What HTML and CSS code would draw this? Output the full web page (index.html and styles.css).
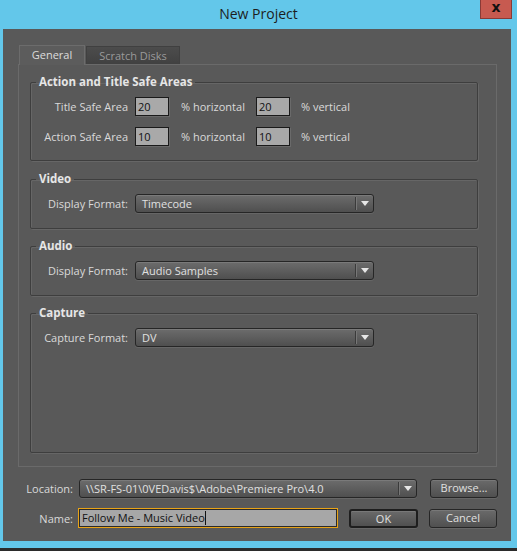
FILE: index.html
```html
<!DOCTYPE html>
<html>
<head>
<meta charset="utf-8">
<link rel="stylesheet" href="styles.css">
</head>
<body>
<div class="window">
  <div class="titlebar">
    <div class="title">New Project</div>
    <div class="close">x</div>
  </div>
  <div class="client">
    <div class="tabs">
      <div class="tab active">General</div>
      <div class="tab">Scratch Disks</div>
    </div>
    <div class="panel">
      <fieldset class="group">
        <legend>Action and Title Safe Areas</legend>
        <div class="row">
          <span class="label">Title Safe Area</span>
          <span class="num">20</span>
          <span class="unit">% horizontal</span>
          <span class="num">20</span>
          <span class="unit2">% vertical</span>
        </div>
        <div class="row second">
          <span class="label">Action Safe Area</span>
          <span class="num">10</span>
          <span class="unit">% horizontal</span>
          <span class="num">10</span>
          <span class="unit2">% vertical</span>
        </div>
      </fieldset>
      <fieldset class="group">
        <legend>Video</legend>
        <div class="row">
          <span class="label">Display Format:</span>
          <div class="select"><span class="value">Timecode</span><span class="arrow"></span></div>
        </div>
      </fieldset>
      <fieldset class="group">
        <legend>Audio</legend>
        <div class="row">
          <span class="label">Display Format:</span>
          <div class="select"><span class="value">Audio Samples</span><span class="arrow"></span></div>
        </div>
      </fieldset>
      <fieldset class="group grow">
        <legend>Capture</legend>
        <div class="row">
          <span class="label">Capture Format:</span>
          <div class="select"><span class="value">DV</span><span class="arrow"></span></div>
        </div>
      </fieldset>
    </div>
    <div class="bottom">
      <div class="brow">
        <span class="blabel">Location:</span>
        <div class="select wide"><span class="value">\\SR-FS-01\0VEDavis$\Adobe\Premiere Pro\4.0</span><span class="arrow"></span></div>
        <div class="btn">Browse...</div>
      </div>
      <div class="brow name">
        <span class="blabel">Name:</span>
        <div class="nameinput"><span class="nametext">Follow Me - Music Video</span><span class="caret"></span></div>
        <div class="btn default">OK</div>
        <div class="btn">Cancel</div>
      </div>
    </div>
  </div>
  <div class="edge"></div>
</div>
</body>
</html>
```
FILE: styles.css
```css
html, body {
  margin: 0;
  padding: 0;
}
body {
  background: #63c7ea;
  font-family: "Open Sans", "Liberation Sans", sans-serif;
  font-size: 11px;
  color: #d9d9d9;
}
.window {
  width: 517px;
  height: 551px;
  background: #63c7ea;
  display: flex;
  flex-direction: column;
  overflow: hidden;
}
.titlebar {
  height: 29px;
  display: grid;
  grid-template-columns: 1fr auto 1fr;
  flex: none;
}
.title {
  grid-column: 2;
  font-family: "Open Sans", sans-serif;
  font-size: 14px;
  color: #1d1d1d;
  line-height: 28px;
}
.close {
  grid-column: 3;
  justify-self: end;
  width: 30px;
  height: 18px;
  margin-right: 5px;
  background: #c75a50;
  border: 1px solid #8a3a36;
  border-top: none;
  color: #111;
  font-family: "DejaVu Sans", sans-serif;
  font-weight: bold;
  font-size: 14px;
  line-height: 15px;
  text-align: center;
}
.client {
  margin: 0 6px 0 3px;
  height: 512px;
  background: #595959;
  padding: 16px 0 0 15px;
  box-sizing: border-box;
  flex: none;
}
.tabs {
  display: flex;
  padding-left: 1px;
  height: 19px;
  align-items: flex-end;
}
.tab {
  width: 94px;
  height: 18px;
  box-sizing: border-box;
  line-height: 17px;
  text-align: center;
  border: 1px solid #404040;
  border-bottom: none;
  background: linear-gradient(#4c4c4c, #414141);
  color: #9a9a9a;
  margin-left: 1px;
}
.tab.active {
  width: 66px;
  height: 20px;
  margin-left: 0;
  margin-bottom: -1px;
  line-height: 18px;
  background: #5c5c5c;
  border-color: #6c6c6c;
  color: #dcdcdc;
  position: relative;
  z-index: 1;
}
.panel {
  width: 479px;
  height: 403px;
  box-sizing: border-box;
  border: 1px solid #6a6a6a;
  padding: 10px 18px 13px 11px;
  display: flex;
  flex-direction: column;
}
.group {
  margin: 0 0 11px 0;
  padding: 8px 0 14px 0;
  border: 1px solid #3e3e3e;
  border-radius: 2px;
  box-shadow: 1px 1px 0 #666, inset 1px 1px 0 #666;
  min-width: 0;
}
.group:nth-of-type(2) { padding-bottom: 15px; margin-bottom: 10px; }
.group:nth-of-type(3) { padding-bottom: 15px; margin-bottom: 10px; }
.group.grow { flex: 1; margin-bottom: 0; }
legend {
  font-weight: bold;
  font-size: 11.5px;
  color: #e6e6e6;
  margin-left: 5px;
  padding: 0 3px;
  line-height: 14px;
}
.row {
  display: flex;
  align-items: center;
  height: 19px;
}
.row.second { margin-top: 11px; }
.label {
  width: 97px;
  text-align: right;
  margin-right: 7px;
  flex: none;
}
.num {
  width: 34px;
  height: 19px;
  box-sizing: border-box;
  background: #a9a9a9;
  border: 1px solid #1a1a1a;
  box-shadow: 1px 1px 0 #6a6a6a;
  color: #111;
  padding-left: 2px;
  line-height: 17px;
  flex: none;
}
.unit {
  width: 87px;
  padding-left: 12px;
  box-sizing: border-box;
  flex: none;
}
.unit2 {
  padding-left: 11px;
}
.select {
  width: 239px;
  height: 19px;
  box-sizing: border-box;
  border: 1px solid #262626;
  border-radius: 3px;
  background: linear-gradient(#6c6c6c, #4f4f4f);
  box-shadow: inset 0 1px 0 #7a7a7a, 0 1px 0 #666;
  display: flex;
  align-items: center;
  flex: none;
}
.select .value {
  flex: 1;
  padding-left: 6px;
  color: #e0e0e0;
  white-space: nowrap;
  overflow: hidden;
}
.select .arrow {
  width: 17px;
  height: 13px;
  border-left: 1px solid #3a3a3a;
  box-shadow: inset 1px 0 0 #777;
  display: flex;
  align-items: center;
  justify-content: center;
  flex: none;
}
.select .arrow::after {
  content: "";
  border-left: 4px solid transparent;
  border-right: 4px solid transparent;
  border-top: 5px solid #e6e6e6;
}
.bottom {
  margin-left: -15px;
  padding-top: 12px;
}
.brow {
  display: flex;
  align-items: center;
  height: 19px;
}
.brow.name {
  margin-top: 10px;
  height: 20px;
}
.blabel {
  width: 70px;
  text-align: right;
  margin-right: 6px;
  flex: none;
}
.name .blabel { margin-right: 5px; }
.select.wide {
  width: 338px;
  margin-right: 13px;
}
.btn {
  width: 68px;
  height: 19px;
  box-sizing: border-box;
  border: 1px solid #262626;
  border-radius: 3px;
  background: linear-gradient(#6a6a6a, #505050);
  box-shadow: inset 0 1px 0 #787878, 0 1px 0 #666;
  text-align: center;
  line-height: 16px;
  color: #e0e0e0;
  flex: none;
}
.btn.default {
  width: 69px;
  border: 2px solid #1e1e1e;
  line-height: 15px;
  margin-right: 11px;
}
.nameinput {
  width: 260px;
  height: 20px;
  box-sizing: border-box;
  border: 1px solid #e8a317;
  background: #a7a7a7;
  box-shadow: inset 0 0 0 1px #2a2a2a;
  color: #111;
  padding-left: 3px;
  line-height: 18px;
  display: flex;
  align-items: center;
  margin-right: 11px;
  flex: none;
}
.caret {
  width: 1px;
  height: 14px;
  background: #111;
}
.edge {
  margin-top: 7px;
  height: 3px;
  background: #2b2b2b;
}
```
